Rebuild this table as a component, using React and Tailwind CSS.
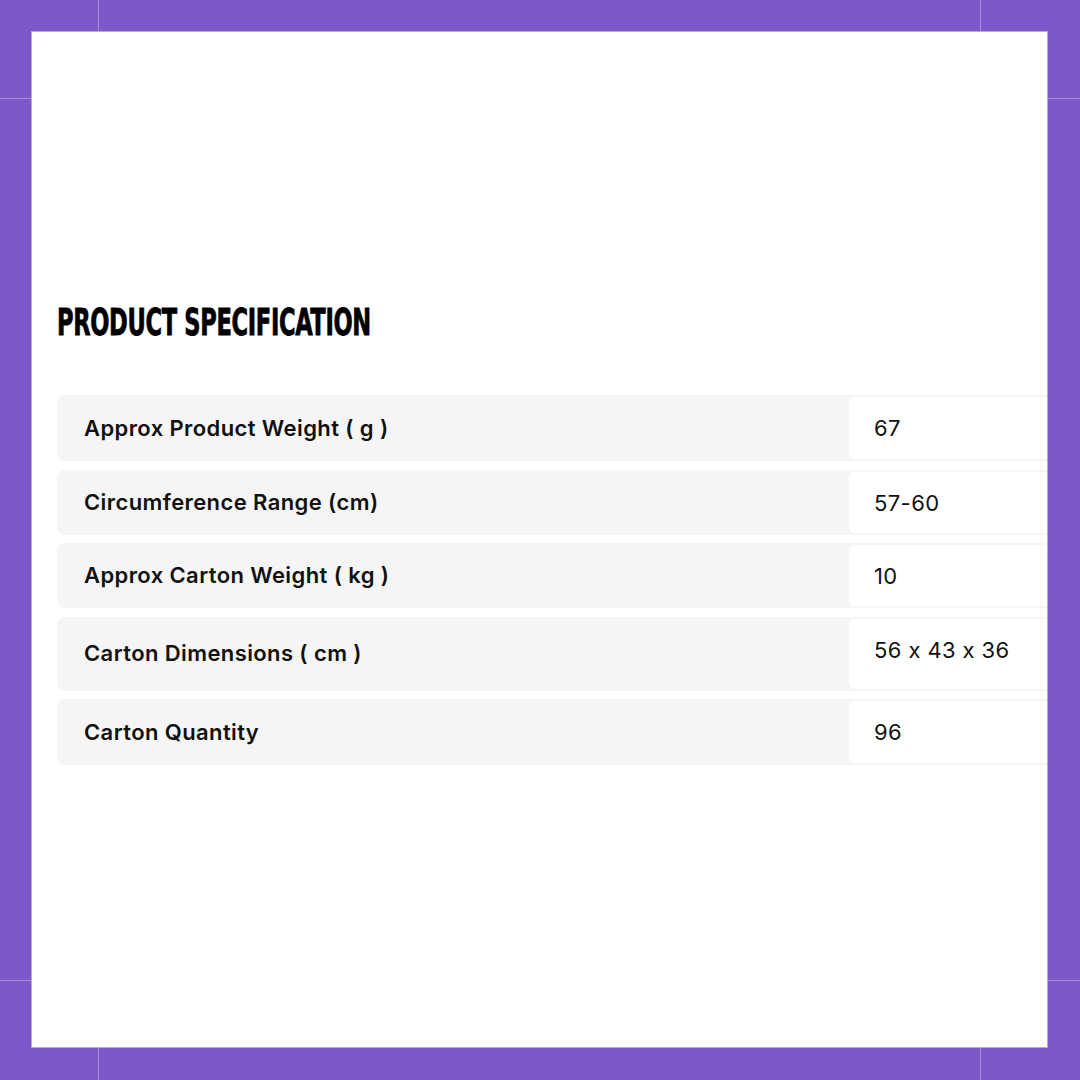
const specs = [
  { label: 'Approx Product Weight ( g )', value: '67', h: 'h-[66px]' },
  { label: 'Circumference Range (cm)', value: '57-60', h: 'h-[65px]' },
  { label: 'Approx Carton Weight ( kg )', value: '10', h: 'h-[65px]' },
  { label: 'Carton Dimensions ( cm )', value: '56 x 43 x 36', h: 'h-[74px]' },
  { label: 'Carton Quantity', value: '96', h: 'h-[66px]' },
]

// purple frame band with the faint crop lines
function Band({ vertical }) {
  const line = 'border-[#a68ddb]'
  if (vertical) {
    return (
      <div className="flex flex-col">
        <div className={`h-[67px] border-b ${line}`} />
        <div className={`h-[882px] border-b ${line}`} />
        <div className="flex-1" />
      </div>
    )
  }
  return (
    <div className="col-span-3 flex">
      <div className={`w-[99px] border-r ${line}`} />
      <div className={`w-[882px] border-r ${line}`} />
      <div className="flex-1" />
    </div>
  )
}

function SpecRow({ label, value, h }) {
  return (
    <div className={`flex ${h} w-[1010px] rounded-lg bg-[#f5f5f5] p-[2px]`}>
      <div className="flex w-[790px] items-center pl-[25px] text-[22px] font-semibold tracking-[0.4px] text-[#111]">
        {label}
      </div>
      <div className="flex-1 rounded-md bg-white pl-[25px] pt-[16px] text-[22px] leading-[30px] tracking-[0.4px] text-[#111]">
        {value}
      </div>
    </div>
  )
}

export default function App() {
  return (
    <div className="grid h-[1080px] w-[1080px] grid-cols-[32px_1015px_33px] grid-rows-[32px_1015px_33px] overflow-hidden bg-[#7d58c8] font-['Inter',sans-serif] [font-feature-settings:'calt'_0]">
      <Band />
      <Band vertical />
      <div className="overflow-hidden bg-white pl-[25px] pt-[262px] outline outline-1 outline-[#b9a6e3]">
        <h2 className="inline-block origin-left scale-x-[0.66] whitespace-nowrap font-['DejaVu_Sans_Condensed','DejaVu_Sans',sans-serif] text-[38px] font-bold leading-[56px] tracking-[-0.5px] text-black [-webkit-text-stroke:0.8px_black]">
          PRODUCT SPECIFICATION
        </h2>
        <div className="mt-[45px] flex flex-col gap-[8.5px]">
          {specs.map((s) => (
            <SpecRow key={s.label} {...s} />
          ))}
        </div>
      </div>
      <Band vertical />
      <Band />
    </div>
  )
}
